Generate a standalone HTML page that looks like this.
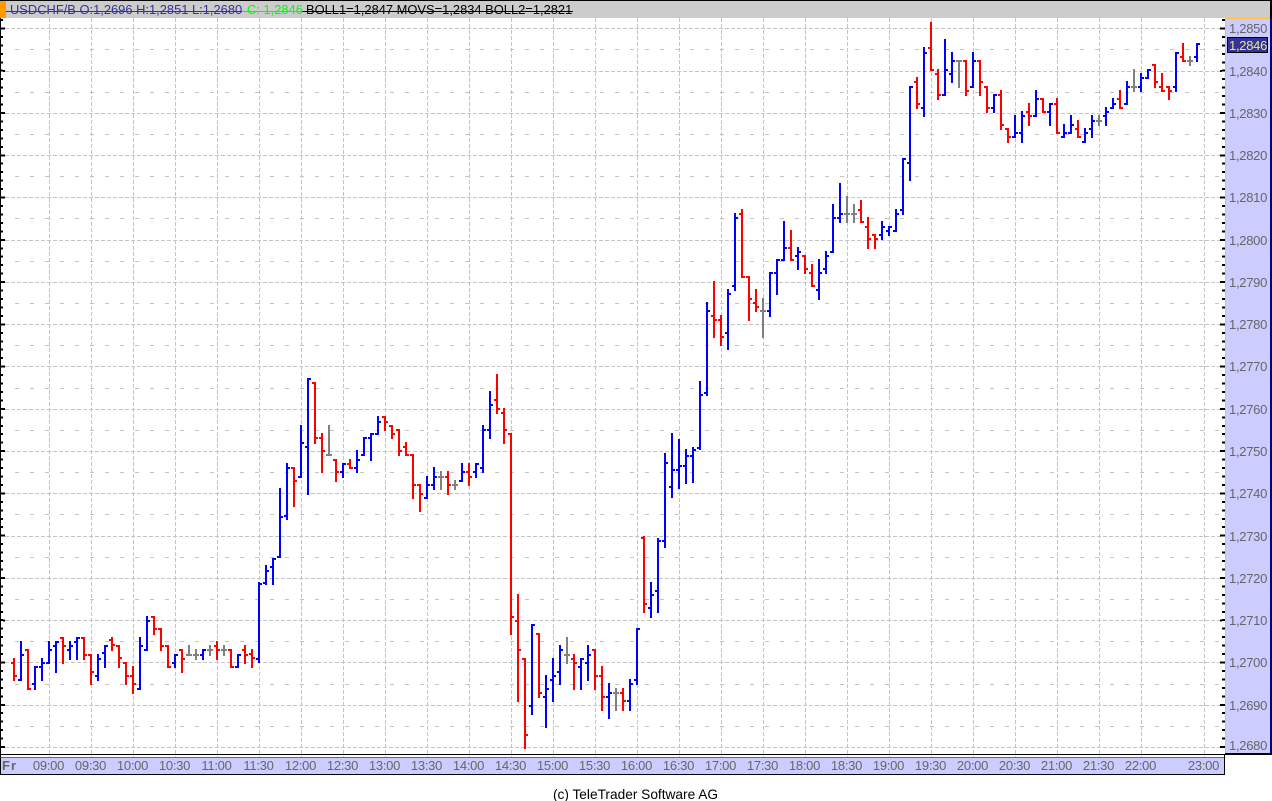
<!DOCTYPE html>
<html lang="en"><head><meta charset="utf-8"><title>USDCHF/B</title>
<style>
html,body{margin:0;padding:0;background:#fff;width:1272px;height:801px;overflow:hidden}
svg{display:block}
text{font-family:"Liberation Sans",Arial,sans-serif;white-space:pre}
.p{font-size:13px;letter-spacing:-.28px;fill:#666}
.t{font-size:13px;letter-spacing:-.28px;fill:#666;text-anchor:middle}
.h{font-size:12.9px}
</style></head><body>
<svg width="1272" height="801" viewBox="0 0 1272 801" xmlns="http://www.w3.org/2000/svg">
<rect width="1272" height="801" fill="#fff"/>
<g shape-rendering="crispEdges">
<path fill="none" stroke="#c4c4c4" stroke-dasharray="4 2" d="M5 28.5H1222M5 71.5H1222M5 113.5H1222M5 155.5H1222M5 197.5H1222M5 240.5H1222M5 282.5H1222M5 324.5H1222M5 366.5H1222M5 409.5H1222M5 451.5H1222M5 493.5H1222M5 536.5H1222M5 578.5H1222M5 620.5H1222M5 662.5H1222M5 705.5H1222M5 747.5H1222"/>
<path fill="none" stroke="#c4c4c4" stroke-dasharray="4 11" d="M15 49.5H1222M15 92.5H1222M15 134.5H1222M15 176.5H1222M15 218.5H1222M15 261.5H1222M15 303.5H1222M15 345.5H1222M15 388.5H1222M15 430.5H1222M15 472.5H1222M15 514.5H1222M15 557.5H1222M15 599.5H1222M15 641.5H1222M15 684.5H1222M15 726.5H1222"/>
<path fill="none" stroke="#c4c4c4" stroke-dasharray="4 2" d="M49.5 18V758M91.5 18V758M133.5 18V758M175.5 18V758M217.5 18V758M259.5 18V758M301.5 18V758M343.5 18V758M385.5 18V758M427.5 18V758M469.5 18V758M511.5 18V758M553.5 18V758M595.5 18V758M637.5 18V758M679.5 18V758M721.5 18V758M763.5 18V758M805.5 18V758M847.5 18V758M889.5 18V758M931.5 18V758M973.5 18V758M1015.5 18V758M1057.5 18V758M1099.5 18V758M1141.5 18V758M1204.5 18V758"/>
<!-- blue bars -->
<path fill="none" stroke="#0000ff" stroke-width="2" d="M21 641V681M18 680H21M21 655H24M35 666V690M32 684H35M35 667H38M42 658V681M39 667H42M42 663H45M49 641V664M46 663H49M49 650H52M56 641V673M53 646H56M56 642H59M70 641V660M67 650H70M70 646H73M77 637V660M74 642H77M77 638H80M98 654V681M95 676H98M98 659H101M105 645V668M102 653H105M105 646H108M140 637V690M137 689H140M140 646H143M147 616V651M144 650H147M147 621H150M175 654V668M172 663H175M175 655H178M203 649V660M200 655H203M203 650H206M238 654V668M235 667H238M238 655H241M259 582V663M256 659H259M259 584H262M266 565V585M263 583H266M266 571H269M273 558V585M270 567H273M273 559H276M280 488V558M277 557H280M280 517H283M287 463V520M284 516H287M287 468H290M301 425V478M298 477H301M301 443H304M308 378V495M305 447H308M308 379H311M343 463V478M340 472H343M343 464H346M357 450V473M354 468H357M357 460H360M364 437V456M361 455H364M364 438H367M371 433V461M368 438H371M371 434H374M378 416V435M375 434H378M378 422H381M427 476V499M424 498H427M427 485H430M434 467V490M431 485H434M434 477H437M462 463V482M459 481H462M462 472H465M476 463V478M473 472H476M476 464H479M483 425V473M480 468H483M483 430H486M490 391V439M487 430H490M490 405H493M532 624V715M529 706H532M532 625H535M546 675V728M543 697H546M546 689H549M553 658V702M550 680H553M553 676H556M560 645V685M557 672H560M560 650H563M581 658V690M578 667H581M581 659H584M588 645V681M585 663H588M588 655H591M609 683V719M606 697H609M609 693H612M630 679V711M627 701H630M630 684H633M637 628V685M634 680H637M637 629H640M651 582V618M648 608H651M651 595H654M658 538V613M655 591H658M658 541H661M665 453V548M662 541H665M665 463H668M672 433V498M669 487H672M672 470H675M679 439V489M676 470H679M679 466H682M686 449V484M683 466H686M686 456H689M693 447V483M690 456H693M693 450H696M700 381V450M697 448H700M700 395H703M707 302V396M704 393H707M707 311H710M728 289V350M725 333H728M728 294H731M735 213V291M732 286H735M735 218H738M770 272V317M767 311H770M770 273H773M777 259V295M774 273H777M777 260H780M784 221V261M781 260H784M784 248H787M798 247V270M795 256H798M798 252H801M819 259V300M816 290H819M819 273H822M826 251V274M823 269H826M826 256H829M833 204V253M830 252H833M833 218H836M840 183V223M837 218H840M840 214H843M882 221V240M879 235H882M882 227H885M889 226V236M886 231H889M889 227H892M896 209V232M893 231H896M896 214H899M903 158V215M900 210H903M903 159H906M910 86V181M907 163H910M910 87H913M924 47V117M921 108H924M924 53H927M945 39V96M942 95H945M945 70H948M952 52V83M949 74H952M952 61H955M973 52V88M970 87H973M973 61H976M994 94V113M991 108H994M994 95H997M1015 115V138M1012 137H1015M1015 133H1018M1022 111V143M1019 133H1022M1022 116H1025M1036 90V117M1033 116H1036M1036 99H1039M1050 103V126M1047 112H1050M1050 104H1053M1064 124V138M1061 137H1064M1064 133H1067M1071 115V134M1068 133H1071M1071 125H1074M1085 128V143M1082 142H1085M1085 133H1088M1092 115V138M1089 129H1092M1092 121H1095M1106 107V126M1103 116H1106M1106 112H1109M1113 98V109M1110 108H1113M1113 104H1116M1127 81V105M1124 104H1127M1127 87H1130M1141 73V92M1138 87H1141M1141 78H1144M1148 69V79M1145 78H1148M1148 70H1151M1176 52V92M1173 87H1176M1176 53H1179M1197 43V62M1194 57H1197M1197 44H1200"/>
<!-- red bars -->
<path fill="none" stroke="#ff0000" stroke-width="2" d="M14 658V681M11 663H14M14 676H17M28 649V690M25 650H28M28 689H31M63 637V664M60 638H63M63 646H66M84 637V660M81 638H84M84 655H87M91 654V685M88 655H91M91 672H94M112 637V651M109 640H112M112 645H115M119 645V668M116 646H119M119 658H122M126 662V685M123 663H126M126 676H129M133 666V694M130 676H133M133 684H136M154 616V635M151 617H154M154 629H157M161 628V651M158 629H161M161 646H164M168 645V668M165 646H168M168 667H171M182 649V673M179 650H182M182 659H185M217 641V660M214 646H217M217 650H220M231 649V668M228 650H231M231 667H234M245 645V664M242 650H245M245 655H248M252 649V668M249 654H252M252 658H255M294 467V507M291 468H294M294 481H297M315 382V444M312 383H315M315 438H318M322 433V473M319 438H322M322 451H325M336 459V482M333 460H336M336 472H339M350 459V469M347 464H350M350 468H353M385 416V431M382 417H385M385 422H388M392 425V439M389 426H392M392 434H395M399 429V456M396 430H399M399 451H402M406 442V456M403 447H406M406 455H409M413 454V499M410 455H413M413 485H416M420 484V512M417 485H420M420 494H423M448 471V495M445 477H448M448 485H451M469 463V486M466 472H469M469 477H472M497 374V414M494 400H497M497 409H500M504 408V444M501 413H504M504 430H507M511 433V635M508 434H511M511 617H514M518 594V702M515 621H518M518 650H521M525 658V749M522 659H525M525 735H528M539 633V698M536 634H539M539 693H542M574 654V690M571 659H574M574 663H577M595 649V690M592 650H595M595 676H598M602 666V711M599 676H602M602 697H605M623 688V711M620 693H623M623 701H626M644 536V613M641 538H644M644 604H647M714 281V338M711 316H714M714 320H717M721 315V346M718 320H721M721 337H724M742 209V278M739 214H742M742 277H745M749 276V321M746 277H749M749 299H752M756 289V312M753 303H756M756 307H759M791 230V261M788 248H791M791 260H794M805 255V274M802 256H805M805 269H808M812 264V287M809 273H812M812 286H815M861 200V223M858 210H861M861 222H864M868 217V249M865 227H868M868 239H871M875 234V249M872 235H875M875 239H878M917 77V109M914 82H917M917 104H920M931 22V71M928 48H931M931 70H934M938 69V100M935 74H938M938 95H941M966 60V96M963 61H966M966 91H969M980 60V96M977 61H980M980 82H983M987 86V113M984 87H987M987 108H990M1001 90V130M998 95H1001M1001 125H1004M1008 128V143M1005 129H1008M1008 137H1011M1029 103V126M1026 112H1029M1029 116H1032M1043 98V113M1040 99H1043M1043 112H1046M1057 98V134M1054 104H1057M1057 133H1060M1078 120V138M1075 129H1078M1078 137H1081M1120 90V109M1117 99H1120M1120 108H1123M1155 64V88M1152 65H1155M1155 82H1158M1162 73V92M1159 87H1162M1162 91H1165M1169 86V100M1166 87H1169M1169 91H1172M1183 43V62M1180 57H1183M1183 61H1186"/>
<!-- gray bars -->
<path fill="none" stroke="#808080" stroke-width="2" d="M189 645V656M186 655H192M196 649V660M193 655H199M210 645V656M207 650H213M224 645V656M221 650H227M329 425V456M326 455H332M441 471V490M438 477H444M455 480V490M452 485H458M567 637V664M564 655H570M616 688V711M613 693H619M763 298V338M760 311H766M847 196V223M844 214H850M854 204V223M851 214H857M959 60V88M956 61H962M1099 115V126M1096 121H1102M1134 69V92M1131 87H1137M1190 56V66M1187 61H1193"/>
<!-- header -->
<rect x="0" y="0" width="1272" height="1" fill="#000"/>
<rect x="0" y="1" width="1270" height="17" fill="#cccccc"/>
<rect x="1270" y="0" width="2" height="18" fill="#000"/>
<rect x="0" y="1" width="6" height="17" fill="#ff9900"/>
<rect x="6" y="11" width="236" height="1" fill="#333399"/>
<rect x="242" y="11" width="60" height="1" fill="#00ff00"/>
<rect x="302" y="11" width="271" height="1" fill="#000"/>
<!-- left axis -->
<rect x="0" y="18" width="1" height="737" fill="#000"/>
<path fill="none" stroke="#000" stroke-width="3" stroke-dasharray="2 6.454" d="M1.5 19V755"/>
<path fill="none" stroke="#000" stroke-width="2" stroke-dasharray="2 40.27" d="M4 27.5V755"/>
<!-- right axis -->
<rect x="1226" y="19" width="44" height="734" fill="#ccccff"/>
<rect x="1225" y="18" width="45" height="1" fill="#ffc040"/>
<rect x="1225" y="18" width="1" height="735" fill="#ffc040"/>
<rect x="1270" y="18" width="2" height="736" fill="#000099"/>
<rect x="1225" y="753" width="47" height="2" fill="#000"/>
<path fill="none" stroke="#000" stroke-width="3" stroke-dasharray="2 6.454" d="M1223.5 19V753"/>
<path fill="none" stroke="#000" stroke-width="2" stroke-dasharray="2 40.27" d="M1221 27.5V753"/>
<!-- bottom axis -->
<rect x="0" y="754" width="1225" height="1" fill="#000"/>
<rect x="1" y="757" width="1223" height="1" fill="#666688"/>
<rect x="1" y="758" width="1223" height="16" fill="#ccccff"/>
<rect x="0" y="774" width="1225" height="1" fill="#000"/>
<rect x="1224" y="755" width="1" height="20" fill="#000"/>
<rect x="0" y="755" width="1" height="20" fill="#000"/>
<!-- current price box -->
<rect x="1227.5" y="37.5" width="40" height="15" fill="#333399" stroke="#000"/>
</g>
<text class="h" x="10" y="14" fill="#333399">USDCHF/B O:1,2696 H:1,2851 L:1,2680</text>
<text class="h" x="247" y="14" fill="#00ff00">C: 1,2846</text>
<text class="h" x="306" y="14" fill="#000">BOLL1=1,2847 MOVS=1,2834 BOLL2=1,2821</text>
<text class="p" x="1229" y="33">1,2850</text>
<text class="p" x="1229" y="50" style="fill:#e8e888">1,2846</text>
<text class="p" x="1229" y="76">1,2840</text>
<text class="p" x="1229" y="118">1,2830</text>
<text class="p" x="1229" y="160">1,2820</text>
<text class="p" x="1229" y="202">1,2810</text>
<text class="p" x="1229" y="245">1,2800</text>
<text class="p" x="1229" y="287">1,2790</text>
<text class="p" x="1229" y="329">1,2780</text>
<text class="p" x="1229" y="371">1,2770</text>
<text class="p" x="1229" y="414">1,2760</text>
<text class="p" x="1229" y="456">1,2750</text>
<text class="p" x="1229" y="498">1,2740</text>
<text class="p" x="1229" y="541">1,2730</text>
<text class="p" x="1229" y="583">1,2720</text>
<text class="p" x="1229" y="625">1,2710</text>
<text class="p" x="1229" y="667">1,2700</text>
<text class="p" x="1229" y="710">1,2690</text>
<text class="p" x="1229" y="750">1,2680</text>
<text x="2" y="770" style="font-size:13px;font-weight:bold;letter-spacing:1px;fill:#666">Fr</text>
<text class="t" x="48.5" y="770">09:00</text>
<text class="t" x="90.5" y="770">09:30</text>
<text class="t" x="132.5" y="770">10:00</text>
<text class="t" x="174.5" y="770">10:30</text>
<text class="t" x="216.5" y="770">11:00</text>
<text class="t" x="258.5" y="770">11:30</text>
<text class="t" x="300.5" y="770">12:00</text>
<text class="t" x="342.5" y="770">12:30</text>
<text class="t" x="384.5" y="770">13:00</text>
<text class="t" x="426.5" y="770">13:30</text>
<text class="t" x="468.5" y="770">14:00</text>
<text class="t" x="510.5" y="770">14:30</text>
<text class="t" x="552.5" y="770">15:00</text>
<text class="t" x="594.5" y="770">15:30</text>
<text class="t" x="636.5" y="770">16:00</text>
<text class="t" x="678.5" y="770">16:30</text>
<text class="t" x="720.5" y="770">17:00</text>
<text class="t" x="762.5" y="770">17:30</text>
<text class="t" x="804.5" y="770">18:00</text>
<text class="t" x="846.5" y="770">18:30</text>
<text class="t" x="888.5" y="770">19:00</text>
<text class="t" x="930.5" y="770">19:30</text>
<text class="t" x="972.5" y="770">20:00</text>
<text class="t" x="1014.5" y="770">20:30</text>
<text class="t" x="1056.5" y="770">21:00</text>
<text class="t" x="1098.5" y="770">21:30</text>
<text class="t" x="1140.5" y="770">22:00</text>
<text class="t" x="1203.5" y="770">23:00</text>
<text x="635.5" y="799" text-anchor="middle" style="font-size:13.7px;fill:#000">(c) TeleTrader Software AG</text>
</svg>
</body></html>
